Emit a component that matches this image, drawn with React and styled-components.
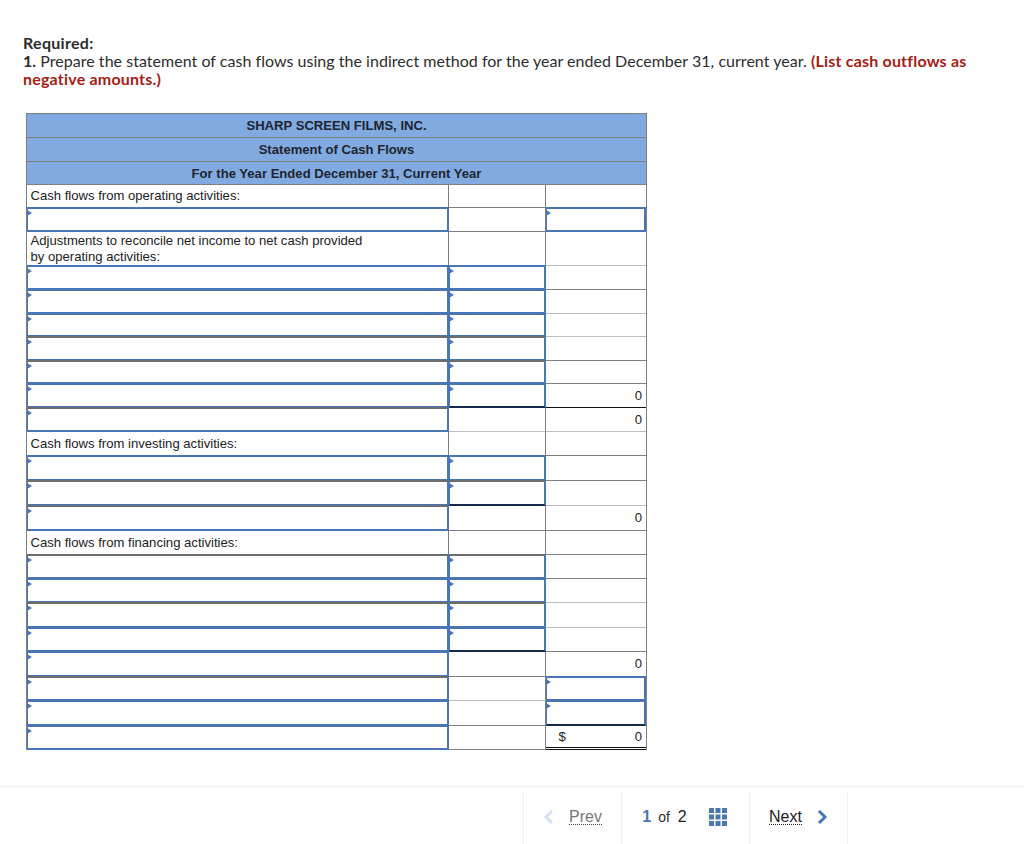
import styled, { createGlobalStyle } from "styled-components";

const GlobalStyle = createGlobalStyle`
  html, body {
    margin: 0;
    padding: 0;
    background: #fff;
  }
  body {
    font-family: "Lato", "Liberation Sans", sans-serif;
    color: #2d2d2d;
  }
`;

const Page = styled.div`
  width: 1024px;
  height: 844px;
  overflow: hidden;
  display: flex;
  flex-direction: column;
  box-sizing: border-box;
  padding-top: 34px;
`;

const Question = styled.div`
  padding: 0 40px 0 23px;
  font-size: 16px;
  letter-spacing: 0.03px;
  line-height: 18px;
`;

const Line = styled.div`
  white-space: nowrap;
`;

const Strong = styled.strong`
  font-weight: 700;
  letter-spacing: 0.3px;
`;

const Lead = styled.strong`
  font-weight: 700;
`;

const Red = styled.strong`
  font-weight: 700;
  color: #a61c14;
  letter-spacing: 0.2px;
`;

const Table = styled.div`
  margin: 25px 0 0 26px;
  width: 621px;
  border-left: 1px solid #7f7f7f;
  border-top: 1px solid #7f7f7f;
  border-right: 1px solid #7f7f7f;
  box-sizing: border-box;
  font-family: "Liberation Sans", Arial, sans-serif;
  font-size: 13.1px;
  color: #222;
`;

const HeaderRow = styled.div`
  height: ${(p) => p.$h}px;
  box-sizing: border-box;
  background: #80aae0;
  border-bottom: 1px solid #7f7f7f;
  display: flex;
  align-items: center;
  justify-content: center;
  font-weight: 700;
  color: #1f2430;
`;

const Row = styled.div`
  height: ${(p) => p.$h}px;
  box-sizing: border-box;
  display: grid;
  grid-template-columns: 422px 97px 1fr;
`;

const lineColors = { dark: "#111", soft: "#bdbdbd" };

const Cell = styled.div`
  box-sizing: border-box;
  border-bottom: 1px solid ${(p) => lineColors[p.$line] || "#7f7f7f"};
  border-right: ${(p) => (p.$last ? "none" : "1px solid #7f7f7f")};
  display: flex;
  align-items: center;
  padding: 0 4px 0 3.5px;
  line-height: 16px;
`;

const Total = styled(Cell)`
  border-bottom: 3px double #111;
`;

const Value = styled.span`
  margin-left: auto;
`;

const Dollar = styled.span`
  margin-left: 9px;
`;

const Input = styled.div`
  position: relative;
  box-sizing: border-box;
  margin-top: -1px;
  border-style: solid;
  border-width: 2px 2px 2px 1.5px;
  border-color: #4a76b5;
  border-top-color: ${(p) => (p.$gray ? "#6d6d6d" : "#4a76b5")};
  border-bottom-color: ${(p) => (p.$end ? "#16294d" : "#4a76b5")};
  background: #fff;
  &::before {
    content: "";
    position: absolute;
    left: -1px;
    top: 1px;
    border-left: 5px solid #4a76b5;
    border-top: 3px solid transparent;
    border-bottom: 3px solid transparent;
  }
`;

const Footer = styled.div`
  margin-top: 36px;
  border-top: 1px solid #f1f1f1;
  padding: 5px 176px 0 523px;
  display: flex;
  height: 52px;
  box-sizing: content-box;
`;

const NavCell = styled.div`
  box-sizing: border-box;
  width: ${(p) => p.$w}px;
  padding-bottom: 2px;
  padding-right: ${(p) => p.$shift || 0}px;
  border-left: 1px solid #f0f0f0;
  border-right: ${(p) => (p.$end ? "1px solid #f0f0f0" : "none")};
  display: flex;
  align-items: center;
  justify-content: center;
  gap: ${(p) => p.$gap || 0}px;
  font-family: "Liberation Sans", Arial, sans-serif;
  font-size: 16px;
`;

const NavLink = styled.span`
  color: ${(p) => (p.$off ? "#777" : "#222")};
  border-bottom: 1px dotted ${(p) => (p.$off ? "#444" : "#222")};
  line-height: 15px;
`;

const PageNow = styled.span`
  color: #4a76b5;
  font-weight: 700;
  font-size: 16px;
`;

const PageOf = styled.span`
  font-size: 14px;
  margin: 0 8px 0 7px;
`;

const PageAll = styled.span`
  color: #222;
`;

const GridIcon = styled.svg`
  margin-left: 22px;
`;

const Chevron = ({ dir, color }) => (
  <svg width="11" height="16" viewBox="0 0 11 16">
    <path
      d={dir === "left" ? "M9 2 L3 8 L9 14" : "M2 2 L8 8 L2 14"}
      fill="none"
      stroke={color}
      strokeWidth="3"
    />
  </svg>
);

const rows = [
  { h: 23, a: "label", text: "Cash flows from operating activities:" },
  { h: 24, a: "input", c: "input" },
  { h: 34, a: "label", text: <>Adjustments to reconcile net income to net cash provided<br />by operating activities:</>, softB: true },
  { h: 24, a: "input", b: "input" },
  { h: 24, a: "input", b: "input", line: "soft" },
  { h: 23, a: "input", b: "input", line: "soft" },
  { h: 24, a: "input", b: "input", gray: true },
  { h: 23, a: "input", b: "input", gray: true },
  { h: 24, a: "input", b: "input", value: "0", dark: true, end: true },
  { h: 24, a: "input", value: "0", line: "soft", softB: true, gray: true },
  { h: 24, a: "label", text: "Cash flows from investing activities:" },
  { h: 25, a: "input", b: "input" },
  { h: 25, a: "input", b: "input", gray: true, end: true, line: "soft" },
  { h: 25, a: "input", value: "0", gray: true },
  { h: 24, a: "label", text: "Cash flows from financing activities:" },
  { h: 24, a: "input", b: "input", gray: true },
  { h: 24, a: "input", b: "input", line: "soft" },
  { h: 25, a: "input", b: "input", gray: true, line: "soft" },
  { h: 24, a: "input", b: "input", end: true },
  { h: 25, a: "input", value: "0", dark: true },
  { h: 24, a: "input", c: "input", gray: true, softB: true },
  { h: 25, a: "input", c: "input", end: true },
  { h: 24, a: "input", total: true },
];

function DataRow({ row }) {
  return (
    <Row $h={row.h}>
      {row.a === "input" ? <Input $gray={row.gray} /> : <Cell>{row.text}</Cell>}
      {row.b === "input" ? (
        <Input $gray={row.gray} $end={row.end} />
      ) : (
        <Cell $line={row.softB ? "soft" : undefined} />
      )}
      {row.c === "input" ? (
        <Input $end={row.end} />
      ) : row.total ? (
        <Total $last>
          <Dollar>$</Dollar>
          <Value>0</Value>
        </Total>
      ) : (
        <Cell $last $line={row.dark ? "dark" : row.line || (row.softB ? "soft" : undefined)}>
          {row.value && <Value>{row.value}</Value>}
        </Cell>
      )}
    </Row>
  );
}

export default function App() {
  return (
    <Page>
      <GlobalStyle />
      <Question>
        <Line>
          <Strong>Required:</Strong>
        </Line>
        <Line>
          <Lead>1.</Lead> Prepare the statement of cash flows using the indirect method for the year ended December 31, current year.{" "}
          <Red>(List cash outflows as</Red>
        </Line>
        <Line>
          <Red>negative amounts.)</Red>
        </Line>
      </Question>
      <Table>
        <HeaderRow $h={24}>SHARP SCREEN FILMS, INC.</HeaderRow>
        <HeaderRow $h={24}>Statement of Cash Flows</HeaderRow>
        <HeaderRow $h={23}>For the Year Ended December 31, Current Year</HeaderRow>
        {rows.map((row, index) => (
          <DataRow key={index} row={row} />
        ))}
      </Table>
      <Footer>
        <NavCell $w={98} $gap={15}>
          <Chevron dir="left" color="#d5e0f0" />
          <NavLink $off>Prev</NavLink>
        </NavCell>
        <NavCell $w={128} $shift={2}>
          <PageNow>1</PageNow>
          <PageOf>of</PageOf>
          <PageAll>2</PageAll>
          <GridIcon width="18" height="18" viewBox="0 0 18 18" fill="#4a76b5">
            {[0, 6.5, 13].map((y) =>
              [0, 6.5, 13].map((x) => (
                <rect key={`${x}-${y}`} x={x} y={y} width="5" height="5" />
              ))
            )}
          </GridIcon>
        </NavCell>
        <NavCell $w={99} $gap={15} $end>
          <NavLink>Next</NavLink>
          <Chevron dir="right" color="#4a76b5" />
        </NavCell>
      </Footer>
    </Page>
  );
}
